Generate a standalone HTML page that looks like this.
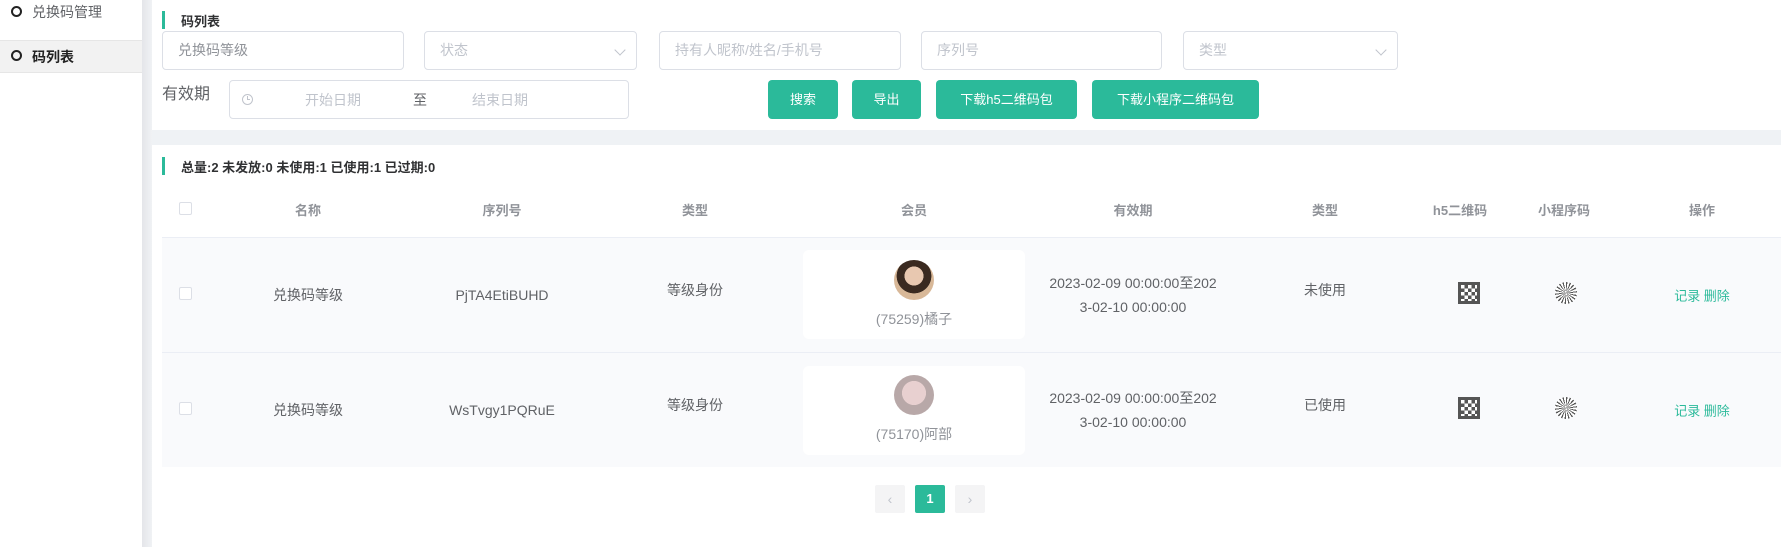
<!DOCTYPE html>
<html><head><meta charset="utf-8"><style>
*{box-sizing:border-box;margin:0;padding:0}
body{width:1781px;height:547px;overflow:hidden;background:#fff;font-family:"Liberation Sans","Noto Sans CJK SC",sans-serif;font-size:14px;color:#606266;position:relative}
.a{position:absolute}
.side{left:0;top:0;width:142px;height:547px;background:#fff}
.gbar{left:142px;top:0;width:10px;height:547px;background:linear-gradient(90deg,#e4e5e9,#f0f2f5)}
.circ{width:11px;height:11px;border:2px solid #222;border-radius:50%}
.inp{border:1px solid #dcdfe6;border-radius:4px;height:39px;top:31px;color:#c0c4cc;font-size:14px;line-height:37px;padding-left:15px;background:#fff}
.inp .ch{position:absolute;right:12px;top:14px;width:8px;height:8px;border-right:1px solid #c0c4cc;border-bottom:1px solid #c0c4cc;transform:rotate(45deg)}
.btn{top:80px;height:39px;background:#2bba9a;border-radius:4px;color:#fff;font-size:13px;line-height:39px;text-align:center}
.th{top:200px;font-weight:bold;color:#909399;font-size:13px;text-align:center;transform:translateX(-50%);white-space:nowrap}
.td{text-align:center;transform:translate(-50%,-50%);white-space:nowrap;color:#606266}
.cb{width:13px;height:13px;border:1px solid #dcdfe6;border-radius:2px;background:#fff}
</style></head><body>
<div class="a side"></div>
<div class="a circ" style="left:11px;top:6px"></div>
<div class="a" style="left:32px;top:2px;font-size:14px;color:#606266">兑换码管理</div>
<div class="a" style="left:0;top:40px;width:142px;height:33px;background:#f2f2f2;border-top:1px solid #e6e6e6;border-bottom:1px solid #e6e6e6"></div>
<div class="a circ" style="left:11px;top:50px"></div>
<div class="a" style="left:32px;top:47px;font-weight:bold;color:#222">码列表</div>
<div class="a gbar"></div>
<div class="a" style="left:152px;top:130px;width:1629px;height:15px;background:#eff2f5"></div>

<div class="a" style="left:162px;top:11px;width:3px;height:18px;background:#2bba9a"></div>
<div class="a" style="left:181px;top:11px;font-weight:bold;color:#303133;font-size:13px">码列表</div>
<div class="a inp" style="left:162px;width:242px;color:#909399">兑换码等级</div>
<div class="a inp" style="left:424px;width:213px">状态<span class="ch"></span></div>
<div class="a inp" style="left:659px;width:242px">持有人昵称/姓名/手机号</div>
<div class="a inp" style="left:921px;width:241px">序列号</div>
<div class="a inp" style="left:1183px;width:215px">类型<span class="ch"></span></div>
<div class="a" style="left:162px;top:80px;font-size:16px;color:#606266">有效期</div>
<div class="a" style="left:229px;top:80px;width:400px;height:39px;border:1px solid #dcdfe6;border-radius:4px"></div>
<div class="a" style="left:242px;top:94px;width:11px;height:11px;border:1px solid #c0c4cc;border-radius:50%"></div>
<div class="a" style="left:247px;top:96px;width:1px;height:4px;background:#c0c4cc"></div>
<div class="a" style="left:247px;top:99px;width:3px;height:1px;background:#c0c4cc"></div>
<div class="a" style="left:305px;top:90px;color:#c0c4cc">开始日期</div>
<div class="a" style="left:413px;top:90px;color:#606266">至</div>
<div class="a" style="left:472px;top:90px;color:#c0c4cc">结束日期</div>
<div class="a btn" style="left:768px;width:70px">搜索</div>
<div class="a btn" style="left:852px;width:69px">导出</div>
<div class="a btn" style="left:936px;width:141px">下载h5二维码包</div>
<div class="a btn" style="left:1092px;width:167px">下载小程序二维码包</div>

<div class="a" style="left:162px;top:157px;width:3px;height:18px;background:#2bba9a"></div>
<div class="a" style="left:181px;top:157px;font-weight:bold;color:#303133;font-size:13px">总量:2 未发放:0 未使用:1 已使用:1 已过期:0</div>

<div class="a cb" style="left:179px;top:202px"></div>
<div class="a th" style="left:308px">名称</div>
<div class="a th" style="left:502px">序列号</div>
<div class="a th" style="left:695px">类型</div>
<div class="a th" style="left:914px">会员</div>
<div class="a th" style="left:1133px">有效期</div>
<div class="a th" style="left:1325px">类型</div>
<div class="a th" style="left:1460px">h5二维码</div>
<div class="a th" style="left:1564px">小程序码</div>
<div class="a th" style="left:1702px">操作</div>

<div class="a" style="left:162px;top:237px;width:1619px;height:230px;background:#f9fafc;border-top:1px solid #ebeef5"></div>
<div class="a" style="left:162px;top:352px;width:1619px;height:1px;background:#ebeef5"></div>

<!-- row1 -->
<div class="a cb" style="left:179px;top:287px"></div>
<div class="a td" style="left:308px;top:295px">兑换码等级</div>
<div class="a td" style="left:502px;top:295px">PjTA4EtiBUHD</div>
<div class="a td" style="left:695px;top:290px">等级身份</div>
<div class="a" style="left:803px;top:250px;width:222px;height:89px;background:#fff;border-radius:6px"></div>
<div class="a" style="left:894px;top:260px;width:40px;height:40px;border-radius:50%;background:radial-gradient(circle at 50% 40%,#e8c8b0 0 30%,#3a2a20 31% 55%,#d8b898 56%)"></div>
<div class="a td" style="left:914px;top:319px;color:#909399">(75259)橘子</div>
<div class="a td" style="left:1133px;top:295px;line-height:24px;text-align:center">2023-02-09 00:00:00至202<br>3-02-10 00:00:00</div>
<div class="a td" style="left:1325px;top:290px">未使用</div>
<div class="a" style="left:1458px;top:282px;width:22px;height:22px;background:repeating-conic-gradient(#555 0 25%,#fff 0 50%) 0 0/7px 7px;border:3px solid #555"></div>
<div class="a" style="left:1555px;top:282px;width:22px;height:22px;border-radius:50%;background:repeating-conic-gradient(#555 0 8deg,#fff 8deg 20deg)"></div>
<div class="a td" style="left:1702px;top:295px;color:#2bba9a;font-size:13px">记录 删除</div>

<!-- row2 -->
<div class="a cb" style="left:179px;top:402px"></div>
<div class="a td" style="left:308px;top:410px">兑换码等级</div>
<div class="a td" style="left:502px;top:410px">WsTvgy1PQRuE</div>
<div class="a td" style="left:695px;top:405px">等级身份</div>
<div class="a" style="left:803px;top:366px;width:222px;height:89px;background:#fff;border-radius:6px"></div>
<div class="a" style="left:894px;top:375px;width:40px;height:40px;border-radius:50%;background:radial-gradient(circle at 50% 45%,#e8d0d0 0 40%,#b8a8a8 41%)"></div>
<div class="a td" style="left:914px;top:434px;color:#909399">(75170)阿部</div>
<div class="a td" style="left:1133px;top:410px;line-height:24px;text-align:center">2023-02-09 00:00:00至202<br>3-02-10 00:00:00</div>
<div class="a td" style="left:1325px;top:405px">已使用</div>
<div class="a" style="left:1458px;top:397px;width:22px;height:22px;background:repeating-conic-gradient(#555 0 25%,#fff 0 50%) 0 0/7px 7px;border:3px solid #555"></div>
<div class="a" style="left:1555px;top:397px;width:22px;height:22px;border-radius:50%;background:repeating-conic-gradient(#555 0 8deg,#fff 8deg 20deg)"></div>
<div class="a td" style="left:1702px;top:410px;color:#2bba9a;font-size:13px">记录 删除</div>

<!-- pagination -->
<div class="a" style="left:875px;top:485px;width:30px;height:28px;background:#f4f4f5;border-radius:2px;color:#c0c4cc;text-align:center;line-height:28px">‹</div>
<div class="a" style="left:915px;top:485px;width:30px;height:28px;background:#2bba9a;border-radius:2px;color:#fff;font-weight:bold;text-align:center;line-height:28px;font-size:13px">1</div>
<div class="a" style="left:955px;top:485px;width:30px;height:28px;background:#f4f4f5;border-radius:2px;color:#c0c4cc;text-align:center;line-height:28px">›</div>
</body></html>
